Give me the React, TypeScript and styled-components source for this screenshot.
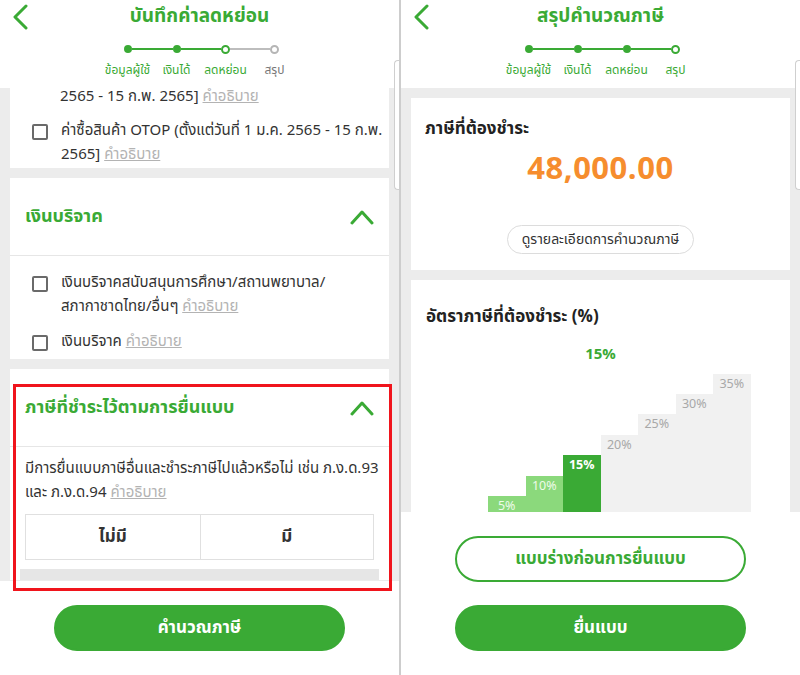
import React from 'react';
import styled, { createGlobalStyle } from 'styled-components';

const GREEN = '#3aaa35';
const LIGHT_GREEN = '#8bd97c';
const ORANGE = '#f68d2e';

const GlobalStyle = createGlobalStyle`
  * { box-sizing: border-box; }
  html, body { margin: 0; padding: 0; background: #fff; }
  body {
    font-family: 'Noto Sans Thai', 'Noto Sans', 'DejaVu Sans', sans-serif;
    color: #333;
  }
`;

type StepState = 'done' | 'current' | 'todo';

interface Step {
  label: string;
  state: StepState;
}

const leftSteps: Step[] = [
  { label: 'ข้อมูลผู้ใช้', state: 'done' },
  { label: 'เงินได้', state: 'done' },
  { label: 'ลดหย่อน', state: 'current' },
  { label: 'สรุป', state: 'todo' },
];

const rightSteps: Step[] = [
  { label: 'ข้อมูลผู้ใช้', state: 'done' },
  { label: 'เงินได้', state: 'done' },
  { label: 'ลดหย่อน', state: 'done' },
  { label: 'สรุป', state: 'current' },
];

// bar heights are measured from a baseline that sits below the visible area
const rates = [
  { label: '5%', height: 44, tone: 'past' },
  { label: '10%', height: 64, tone: 'past' },
  { label: '15%', height: 85, tone: 'active' },
  { label: '20%', height: 105, tone: 'future' },
  { label: '25%', height: 126, tone: 'future' },
  { label: '30%', height: 146, tone: 'future' },
  { label: '35%', height: 166, tone: 'future' },
] as const;

const BackIcon = () => (
  <svg width="18" height="26" viewBox="0 0 18 26" fill="none">
    <polyline points="15,2 4,13 15,24" stroke={GREEN} strokeWidth="3" strokeLinecap="round" strokeLinejoin="round" />
  </svg>
);

const ChevronUp = () => (
  <svg width="24" height="16" viewBox="0 0 24 16" fill="none">
    <polyline points="2,14 12,3 22,14" stroke={GREEN} strokeWidth="3" strokeLinecap="round" strokeLinejoin="round" />
  </svg>
);

const Stepper: React.FC<{ steps: Step[] }> = ({ steps }) => (
  <StepGrid>
    {steps.map((s, i) => {
      const next = steps[i + 1];
      const leftOn = i > 0 && s.state !== 'todo';
      const rightOn = !!next && next.state !== 'todo';
      return (
        <StepCell key={s.label}>
          <DotRow>
            <HalfLine $hidden={i === 0} $on={leftOn} />
            <Dot $state={s.state} />
            <HalfLine $hidden={!next} $on={rightOn} />
          </DotRow>
          <StepLabel $on={s.state !== 'todo'}>{s.label}</StepLabel>
        </StepCell>
      );
    })}
  </StepGrid>
);

const Header: React.FC<{ title: string; steps: Step[] }> = ({ title, steps }) => (
  <HeaderBar>
    <BackButton><BackIcon /></BackButton>
    <Title>{title}</Title>
    <Stepper steps={steps} />
  </HeaderBar>
);

const Explain = () => <Link>คำอธิบาย</Link>;

const CheckItem: React.FC<{ children: React.ReactNode }> = ({ children }) => (
  <Item>
    <Checkbox />
    <ItemText>{children}</ItemText>
  </Item>
);

export default function App() {
  return (
    <>
      <GlobalStyle />
      <Page>
        <Screen>
          <Header title="บันทึกค่าลดหย่อน" steps={leftSteps} />
          <Body>
            <Card>
              <CardContent $top={0} $bottom={1} $gap={10}>
                <ContinuedText>2565 - 15 ก.พ. 2565] <Explain /></ContinuedText>
                <CheckItem>
                  ค่าซื้อสินค้า OTOP (ตั้งแต่วันที่ 1 ม.ค. 2565 - 15 ก.พ.<br />2565] <Explain />
                </CheckItem>
              </CardContent>
            </Card>

            <Card>
              <CardHeader>
                <CardTitle>เงินบริจาค</CardTitle>
                <ChevronUp />
              </CardHeader>
              <CardContent $top={15} $bottom={5} $gap={11}>
                <CheckItem>
                  เงินบริจาคสนับสนุนการศึกษา/สถานพยาบาล/<br />สภากาชาดไทย/อื่นๆ <Explain />
                </CheckItem>
                <CheckItem>
                  เงินบริจาค <Explain />
                </CheckItem>
              </CardContent>
            </Card>

            <Card>
              <CardHeader>
                <CardTitle>ภาษีที่ชำระไว้ตามการยื่นแบบ</CardTitle>
                <ChevronUp />
              </CardHeader>
              <CardContent $top={10} $bottom={0} $gap={9}>
                <Question>
                  มีการยื่นแบบภาษีอื่นและชำระภาษีไปแล้วหรือไม่ เช่น ภ.ง.ด.93<br />และ ภ.ง.ด.94 <Explain />
                </Question>
                <Toggle>
                  <ToggleOption>ไม่มี</ToggleOption>
                  <ToggleOption>มี</ToggleOption>
                </Toggle>
                <Strip />
              </CardContent>
            </Card>
          </Body>
          <Footer $height={94}>
            <PillButton $variant="solid">คำนวณภาษี</PillButton>
          </Footer>
          <Highlight />
          <EdgeTab />
        </Screen>

        <Divider />

        <Screen>
          <Header title="สรุปคำนวณภาษี" steps={rightSteps} />
          <Body $padTop={10}>
            <Card>
              <SummaryContent>
                <SectionTitle>ภาษีที่ต้องชำระ</SectionTitle>
                <Amount>48,000.00</Amount>
                <DetailButton>ดูรายละเอียดการคำนวณภาษี</DetailButton>
              </SummaryContent>
            </Card>
            <Card>
              <RateContent>
                <SectionTitle>อัตราภาษีที่ต้องชำระ (%)</SectionTitle>
                <RateValue>15%</RateValue>
                <Chart>
                  {rates.map((r) => (
                    <Bar key={r.label} $tone={r.tone} style={{ height: r.height }}>
                      {r.label}
                    </Bar>
                  ))}
                </Chart>
              </RateContent>
            </Card>
          </Body>
          <Footer $height={163}>
            <PillButton $variant="outline">แบบร่างก่อนการยื่นแบบ</PillButton>
            <PillButton $variant="solid">ยื่นแบบ</PillButton>
          </Footer>
          <EdgeTab />
        </Screen>
      </Page>
    </>
  );
}

const Page = styled.div`
  display: flex;
  width: 800px;
  height: 675px;
  overflow: hidden;
`;

const Screen = styled.div`
  position: relative;
  width: 399px;
  height: 675px;
  display: flex;
  flex-direction: column;
  overflow: hidden;
  background: #fff;
`;

const Divider = styled.div`
  width: 2px;
  background: #cdcdcd;
`;

const HeaderBar = styled.div`
  position: relative;
  height: 88px;
  flex-shrink: 0;
  padding-top: 3px;
  background: #fff;
`;

const BackButton = styled.div`
  position: absolute;
  left: 11px;
  top: 4px;
  line-height: 0;
`;

const Title = styled.div`
  height: 28px;
  line-height: 28px;
  text-align: center;
  color: ${GREEN};
  font-size: 19px;
  font-weight: 700;
`;

const StepGrid = styled.div`
  display: grid;
  grid-template-columns: repeat(4, 49px);
  justify-content: center;
  margin: 13px 0 0 3px;
`;

const StepCell = styled.div`
  display: flex;
  flex-direction: column;
  align-items: center;
`;

const DotRow = styled.div`
  display: flex;
  align-items: center;
  width: 100%;
  height: 10px;
`;

const HalfLine = styled.div<{ $hidden: boolean; $on: boolean }>`
  flex: 1;
  height: 2px;
  background: ${(p) => (p.$hidden ? 'transparent' : p.$on ? GREEN : '#bdbdbd')};
`;

const Dot = styled.div<{ $state: StepState }>`
  width: ${(p) => (p.$state === 'done' ? 8 : 9)}px;
  height: ${(p) => (p.$state === 'done' ? 8 : 9)}px;
  border-radius: 50%;
  flex-shrink: 0;
  background: ${(p) => (p.$state === 'done' ? GREEN : '#fff')};
  border: 2px solid ${(p) => (p.$state === 'todo' ? '#b5b5b5' : GREEN)};
`;

const StepLabel = styled.div<{ $on: boolean }>`
  margin-top: 8px;
  line-height: 16px;
  font-size: 12px;
  white-space: nowrap;
  color: ${(p) => (p.$on ? GREEN : '#777')};
`;

const Body = styled.div<{ $padTop?: number }>`
  flex: 1;
  min-height: 0;
  overflow: hidden;
  display: flex;
  flex-direction: column;
  gap: 10px;
  padding: ${(p) => p.$padTop ?? 0}px 10px 0 10px;
  background: #ececec;
`;

const Card = styled.div`
  flex-shrink: 0;
  background: #fff;
`;

const CardHeader = styled.div`
  height: 78px;
  display: flex;
  align-items: center;
  justify-content: space-between;
  padding: 0 15px;
  border-bottom: 1px solid #e6e6e6;
`;

const CardTitle = styled.div`
  color: ${GREEN};
  font-size: 18px;
  font-weight: 700;
`;

const CardContent = styled.div<{ $top: number; $bottom: number; $gap: number }>`
  display: flex;
  flex-direction: column;
  gap: ${(p) => p.$gap}px;
  padding: ${(p) => p.$top}px 15px ${(p) => p.$bottom}px 15px;
`;

const ContinuedText = styled.div`
  margin: -3px 0 0 35px;
  line-height: 24px;
  font-size: 15px;
`;

const Item = styled.div`
  display: flex;
  align-items: flex-start;
  gap: 13px;
  padding-left: 7px;
`;

const Checkbox = styled.div`
  flex-shrink: 0;
  width: 16px;
  height: 16px;
  margin-top: 5px;
  border: 2px solid #6a6a6a;
  border-radius: 2px;
`;

const ItemText = styled.div`
  line-height: 24px;
  font-size: 15px;
  color: #333;
  white-space: nowrap;
`;

const Link = styled.span`
  color: #b3b3b3;
  text-decoration: underline;
`;

const Question = styled.div`
  line-height: 24px;
  font-size: 15px;
  color: #333;
  white-space: nowrap;
`;

const Toggle = styled.div`
  display: grid;
  grid-template-columns: 1fr 1fr;
  height: 46px;
  border: 1px solid #e0e0e0;
`;

const ToggleOption = styled.div`
  display: flex;
  align-items: center;
  justify-content: center;
  font-size: 17px;
  font-weight: 700;
  color: #333;
  & + & {
    border-left: 1px solid #e0e0e0;
  }
`;

const Strip = styled.div`
  height: 11px;
  margin: 0 -5px 0 -5px;
  background: #e6e6e6;
`;

const Footer = styled.div<{ $height: number }>`
  flex-shrink: 0;
  height: ${(p) => p.$height}px;
  display: flex;
  flex-direction: column;
  align-items: center;
  gap: 23px;
  padding-top: 24px;
  background: #fff;
`;

const PillButton = styled.div<{ $variant: 'solid' | 'outline' }>`
  width: 291px;
  height: 46px;
  border-radius: 23px;
  display: flex;
  align-items: center;
  justify-content: center;
  font-size: 17px;
  font-weight: 700;
  background: ${(p) => (p.$variant === 'solid' ? GREEN : '#fff')};
  color: ${(p) => (p.$variant === 'solid' ? '#fff' : GREEN)};
  border: 2px solid ${GREEN};
`;

const Highlight = styled.div`
  position: absolute;
  left: 13px;
  top: 384px;
  width: 379px;
  height: 207px;
  border: 3px solid #f0141c;
  pointer-events: none;
`;

const EdgeTab = styled.div`
  position: absolute;
  right: 0;
  top: 60px;
  width: 5px;
  height: 130px;
  background: #fff;
  border: 1px solid #cfcfcf;
  border-right: none;
  border-radius: 4px 0 0 4px;
`;

const SummaryContent = styled.div`
  display: flex;
  flex-direction: column;
  align-items: center;
  padding: 18px 14px 16px;
`;

const SectionTitle = styled.div`
  align-self: stretch;
  line-height: 26px;
  font-size: 17px;
  font-weight: 700;
  color: #222;
`;

const Amount = styled.div`
  margin-top: 7px;
  line-height: 42px;
  font-size: 31px;
  font-weight: 700;
  color: ${ORANGE};
  letter-spacing: 0.5px;
`;

const DetailButton = styled.div`
  margin-top: 34px;
  height: 29px;
  padding: 0 14px;
  border: 1px solid #dcdcdc;
  border-radius: 15px;
  display: flex;
  align-items: center;
  font-size: 14px;
  color: #333;
`;

const RateContent = styled.div`
  display: flex;
  flex-direction: column;
  padding: 24px 0 0 15px;
`;

const RateValue = styled.div`
  margin-top: 15px;
  margin-left: -15px;
  line-height: 20px;
  text-align: center;
  font-size: 15px;
  font-weight: 700;
  color: ${GREEN};
`;

const Chart = styled.div`
  display: flex;
  align-items: flex-end;
  height: 170px;
  margin-top: 5px;
  padding-left: 62px;
`;

const Bar = styled.div<{ $tone: 'past' | 'active' | 'future' }>`
  width: 37.5px;
  padding-top: 4px;
  text-align: center;
  font-size: 12.5px;
  line-height: 14px;
  font-weight: ${(p) => (p.$tone === 'active' ? 700 : 400)};
  background: ${(p) => (p.$tone === 'active' ? GREEN : p.$tone === 'past' ? LIGHT_GREEN : '#f1f1f1')};
  color: ${(p) => (p.$tone === 'future' ? '#a8a8a8' : p.$tone === 'active' ? '#fff' : '#eefbe9')};
`;
